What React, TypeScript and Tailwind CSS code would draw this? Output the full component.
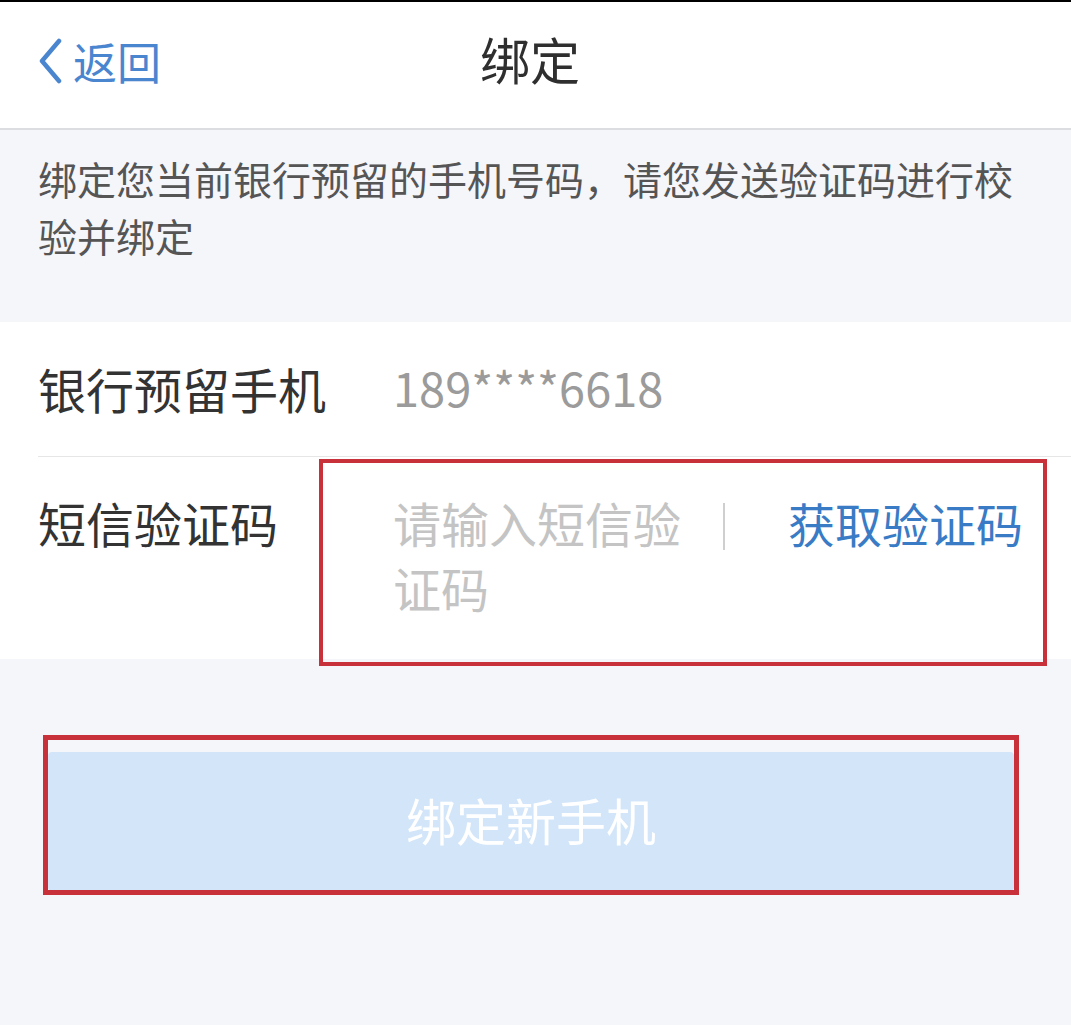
const font = { fontFamily: '"Noto Sans CJK SC", "Noto Sans", sans-serif' };

const BackChevron = () => (
  <svg width="26" height="46" viewBox="0 0 26 46" fill="none" aria-hidden="true">
    <path d="M22 3 L5 23 L22 43" stroke="#4a86d0" strokeWidth="4.5" strokeLinecap="round" strokeLinejoin="round" />
  </svg>
);

const Header = () => (
  <header className="relative flex h-[128px] items-center border-b-2 border-[#dcdde0] bg-white pb-[8px]">
    <button className="flex items-center gap-[10px] pl-[37px] text-[44px] leading-none text-[#4a86d0]">
      <BackChevron />
      <span>返回</span>
    </button>
    <h1 className="absolute left-[480px] top-[31px] text-[50px] leading-none text-[#2f2f2f]">绑定</h1>
  </header>
);

export default function App() {
  return (
    <div className="relative h-[1025px] overflow-hidden bg-[#f5f6fa]" style={font}>
      <div className="h-[2px] bg-black" />
      <Header />

      <p className="px-[38px] pt-[20px] pb-[58px] text-[39px] leading-[57px] text-[#555]">
        绑定您当前银行预留的手机号码，请您发送验证码进行校验并绑定
      </p>

      <section className="bg-white">
        <div className="flex h-[134px] items-center pb-[3px] pl-[38px] text-[48px]">
          <span className="w-[355px] text-[#333]">银行预留手机</span>
          <span className="text-[47px] text-[#9b9b9b]">189****6618</span>
        </div>
        <div className="ml-[38px] h-px bg-[#e6e6e6]" />
        <div className="flex items-start pt-[33px] pb-[39px] pl-[38px] pr-[48px] text-[48px] leading-[65px]">
          <span className="w-[355px] text-[#333]">短信验证码</span>
          <span className="w-[300px] text-[#c4c4c4]">请输入短信验证码</span>
          <span className="mt-[13px] ml-[30px] h-[47px] w-[2px] bg-[#cfcfcf]" />
          <button className="ml-auto text-[47px] leading-[65px] text-[#3a7bc6]">获取验证码</button>
        </div>
      </section>

      <button className="mt-[93px] ml-[48px] flex h-[139px] w-[966px] items-center justify-center rounded-[4px] bg-[#d2e5f9] pb-[5px] text-[50px] text-white">
        绑定新手机
      </button>

      <div className="pointer-events-none absolute left-[319px] top-[459px] h-[207px] w-[728px] border-[4px] border-[#c8303a]" />
      <div className="pointer-events-none absolute left-[43px] top-[735px] h-[160px] w-[976px] border-[5px] border-[#c8303a]" />
    </div>
  );
}
